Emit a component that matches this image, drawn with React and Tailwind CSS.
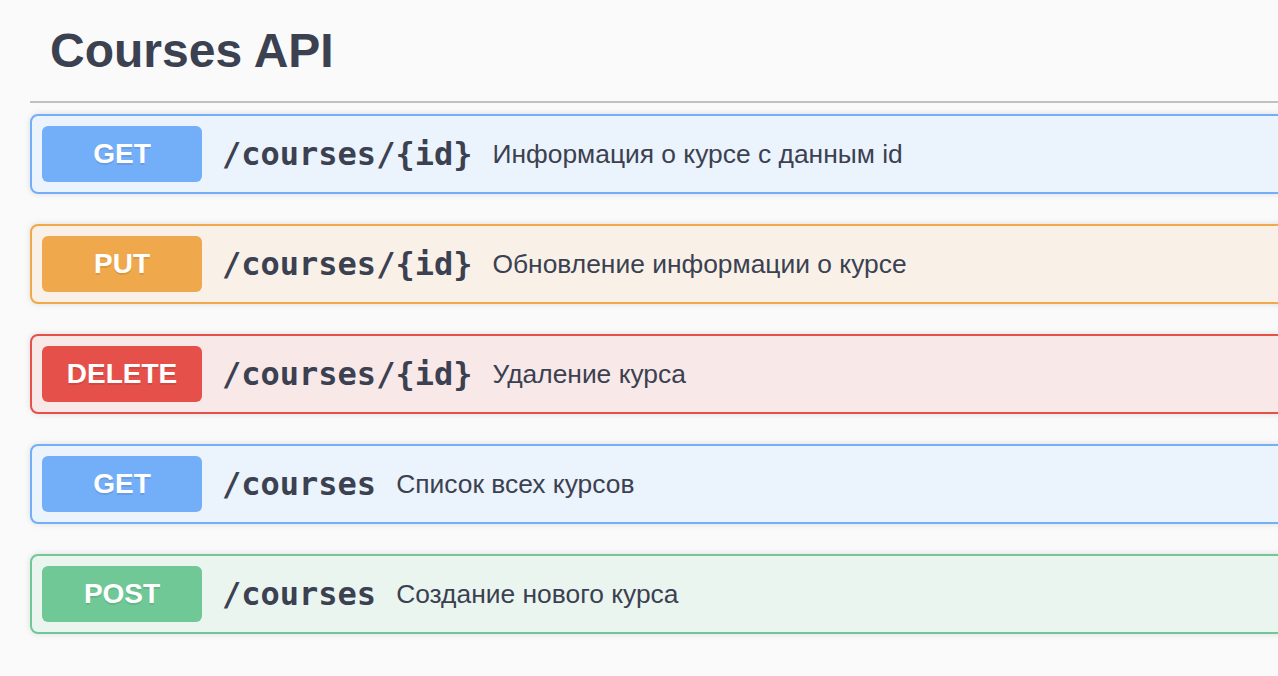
import React from 'react';

const endpoints = [
  { method: 'GET', path: '/courses/{id}', summary: 'Информация о курсе с данным id' },
  { method: 'PUT', path: '/courses/{id}', summary: 'Обновление информации о курсе' },
  { method: 'DELETE', path: '/courses/{id}', summary: 'Удаление курса' },
  { method: 'GET', path: '/courses', summary: 'Список всех курсов' },
  { method: 'POST', path: '/courses', summary: 'Создание нового курса' },
];

const styles = {
  GET: { block: 'bg-[#ebf3fc] border-[#73aef9]', badge: 'bg-[#73aef9]' },
  PUT: { block: 'bg-[#f9f1e8] border-[#efa84b]', badge: 'bg-[#efa84b]' },
  DELETE: { block: 'bg-[#f9e8e8] border-[#e5504a]', badge: 'bg-[#e5504a]' },
  POST: { block: 'bg-[#ebf5ef] border-[#6fc896]', badge: 'bg-[#6fc896]' },
};

const Opblock = ({ method, path, summary }) => {
  const s = styles[method];
  return (
    <div className={`flex items-center border-2 rounded-[8px] p-[10px] mb-[30px] shadow-[0_0_6px_rgba(0,0,0,0.12)] ${s.block}`}>
      <span
        className={`w-[160px] h-[56px] flex items-center justify-center rounded-[6px] text-white font-bold text-[28px] [text-shadow:0_2px_0_rgba(0,0,0,0.1)] ${s.badge}`}
        style={{ fontFamily: '"Liberation Sans", Arial, sans-serif' }}
      >
        {method}
      </span>
      <span
        className="px-[20px] text-[32px] font-bold text-[#3b4151] leading-none"
        style={{ fontFamily: '"DejaVu Sans Mono", monospace' }}
      >
        {path}
      </span>
      <span
        className="text-[26.4px] text-[#3b4151] leading-none"
        style={{ fontFamily: '"Liberation Sans", Arial, sans-serif' }}
      >
        {summary}
      </span>
    </div>
  );
};

const App = () => {
  return (
    <div className="w-full min-h-screen h-[676px] overflow-hidden bg-[#fafafa]">
      <div className="w-[1400px] pl-[30px]" style={{ fontFamily: '"Liberation Sans", Arial, sans-serif' }}>
        <h1 className="pt-[27px] pl-[20px] text-[48px] leading-none font-bold text-[#3b4151]">
          Courses API
        </h1>
        <div className="mt-[26px] mb-[11px] h-[2px] bg-[#c0c0c4]" />
        {endpoints.map((e, i) => (
          <Opblock key={i} {...e} />
        ))}
      </div>
    </div>
  );
};

export default App;
